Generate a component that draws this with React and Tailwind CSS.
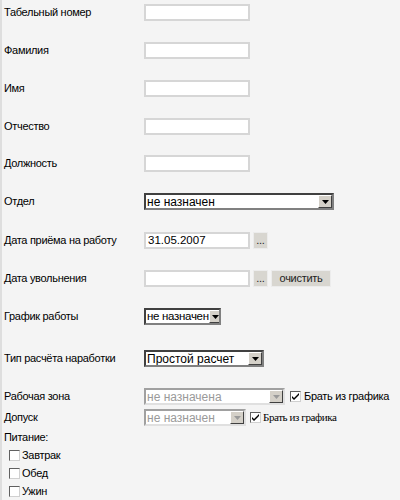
import React from "react";

const font = {
  fontFamily: "'Liberation Sans', Arial, sans-serif",
  letterSpacing: "-0.3px",
};

const TextInput = ({ value = "", w = "w-[106px]" }) => (
  <div
    className={`${w} h-[17px] bg-white border-2 border-[#d6d6d6] flex items-center px-[2px] text-[11.5px] tracking-normal text-black leading-none whitespace-nowrap`}
  >
    {value}
  </div>
);

const Arrow = ({ disabled }) => (
  <div className="w-[14px] h-[13px] shrink-0 bg-[#d4d0c8] border border-t-white border-l-white border-r-[#404040] border-b-[#404040] flex items-center justify-center">
    <svg width="7" height="4" viewBox="0 0 7 4">
      <path d="M0 0h7L3.5 4z" fill={disabled ? "#9a9a9a" : "#000"} />
    </svg>
  </div>
);

const Select = ({ value, w, disabled, text = "text-[12px] tracking-normal" }) => (
  <div
    className={`${w} h-[17px] flex items-center justify-between bg-white border-2 ${
      disabled
        ? "border-t-[#a0a0a0] border-l-[#a0a0a0] border-r-[#e0e0e0] border-b-[#e0e0e0] text-[#9a9a9a]"
        : "border-t-[#404040] border-l-[#404040] border-r-[#808080] border-b-[#808080] text-black"
    } ${text} leading-none whitespace-nowrap overflow-hidden`}
  >
    <span className="pl-[1px]">{value}</span>
    <Arrow disabled={disabled} />
  </div>
);

const SmallBtn = ({ children, w }) => (
  <div
    className={`${w} h-[17px] bg-[#d8d6d0] border border-[#ececec] flex items-center justify-center text-[11px] text-[#222] leading-none whitespace-nowrap`}
  >
    {children}
  </div>
);

const Check = ({ checked }) => (
  <div className="w-[11px] h-[11px] shrink-0 bg-white border border-t-[#606060] border-l-[#606060] border-r-[#d0d0d0] border-b-[#d0d0d0] flex items-center justify-center">
    {checked && (
      <svg width="7" height="7" viewBox="0 0 7 7">
        <path d="M0 3l2 2 5-5v2L2 7 0 5z" fill="#000" />
      </svg>
    )}
  </div>
);

const Row = ({ label, children, mb = "mb-[21px]" }) => (
  <div className={`flex items-center h-[17px] ${mb}`}>
    <div className="w-[140px] shrink-0 text-[11px] text-black whitespace-nowrap">
      {label}
    </div>
    <div className="flex items-center">{children}</div>
  </div>
);

export default function App() {
  return (
    <div
      className="w-[400px] h-[500px] bg-[#f4f4f4] border-l-2 border-[#dedede] pl-[2px] pt-[4px] overflow-hidden"
      style={font}
    >
      <Row label="Табельный номер">
        <TextInput />
      </Row>
      <Row label="Фамилия">
        <TextInput />
      </Row>
      <Row label="Имя">
        <TextInput />
      </Row>
      <Row label="Отчество" mb="mb-[20px]">
        <TextInput />
      </Row>
      <Row label="Должность">
        <TextInput />
      </Row>
      <Row label="Отдел" mb="mb-[22px]">
        <Select value="не назначен" w="w-[190px]" />
      </Row>
      <Row label="Дата приёма на работу">
        <TextInput value="31.05.2007" />
        <div className="ml-[3px]">
          <SmallBtn w="w-[15px]">...</SmallBtn>
        </div>
      </Row>
      <Row label="Дата увольнения">
        <TextInput />
        <div className="ml-[3px] flex gap-[3px]">
          <SmallBtn w="w-[15px]">...</SmallBtn>
          <SmallBtn w="w-[60px]">очистить</SmallBtn>
        </div>
      </Row>
      <Row label="График работы" mb="mb-[25px]">
        <Select
          value="не назначен"
          w="w-[77px]"
          text="text-[11.5px] tracking-[-0.3px]"
        />
      </Row>
      <Row label="Тип расчёта наработки">
        <Select value="Простой расчет" w="w-[120px]" />
      </Row>
      <Row label="Рабочая зона" mb="mb-[4px]">
        <Select value="не назначена" w="w-[141px]" disabled />
        <div className="ml-[5px] flex items-center gap-[3px] text-[11px] whitespace-nowrap">
          <Check checked />
          <span>Брать из графика</span>
        </div>
      </Row>
      <Row label="Допуск" mb="mb-[2px]">
        <Select value="не назначен" w="w-[102px]" disabled />
        <div className="ml-[4px] flex items-center gap-[2px] text-[11px] whitespace-nowrap">
          <Check checked />
          <span
            style={{
              fontFamily: "'Liberation Serif', 'Times New Roman', serif",
              letterSpacing: "-0.4px",
            }}
          >
            Брать из графика
          </span>
        </div>
      </Row>
      <div className="text-[11px] h-[18px] flex items-center">Питание:</div>
      {["Завтрак", "Обед", "Ужин"].map((t) => (
        <div
          key={t}
          className="flex items-center h-[18px] pl-[5px] gap-[2px] text-[11px]"
        >
          <Check />
          <span>{t}</span>
        </div>
      ))}
    </div>
  );
}
